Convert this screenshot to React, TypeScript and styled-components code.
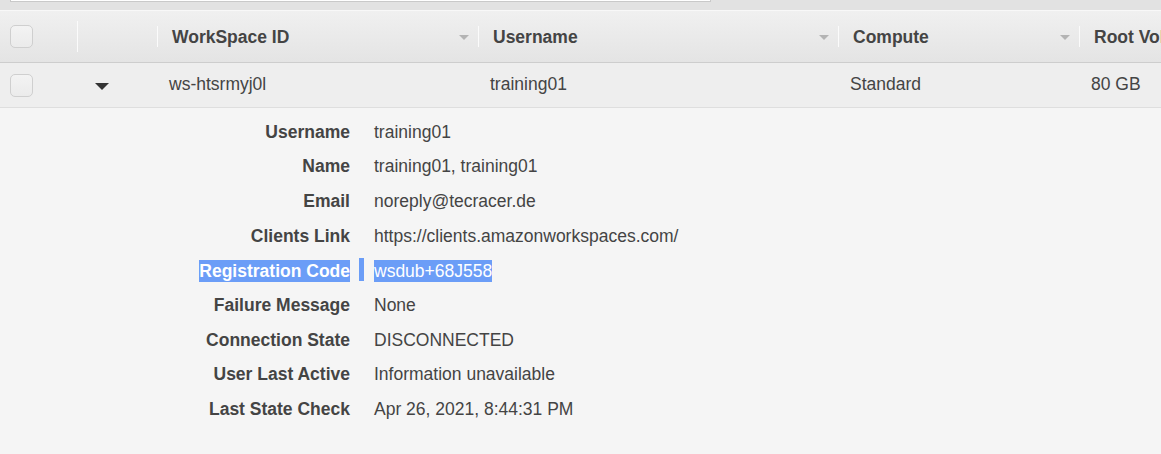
import React from "react";
import styled, { createGlobalStyle } from "styled-components";

const Global = createGlobalStyle`
  html, body { margin: 0; padding: 0; background: #f5f5f5; }
  body { font-family: "Liberation Sans", Arial, sans-serif; color: #444; }
  #root { min-height: 454px; }
`;

const Page = styled.div`
  width: 1161px;
  min-height: 454px;
  overflow: hidden;
  background: #f5f5f5;
  display: flex;
  flex-direction: column;
`;

const TopStrip = styled.div`
  height: 10px;
  background: #e2e2e2;
  border-bottom: 1px solid #f8f8f8;
  padding-left: 10px;
  display: flex;
  align-items: flex-start;
`;

const SearchBox = styled.div`
  width: 699px;
  height: 1px;
  background: #fff;
  border: 1px solid #c9c9c9;
  border-top: none;
`;

const COLS = "77px 80px 321px 360px 241px 1fr";

const HeaderRow = styled.div`
  display: grid;
  grid-template-columns: ${COLS};
  height: 51px;
  background: linear-gradient(#f0f0f0, #e4e4e4);
  border-bottom: 1px solid #cdcdcd;
`;

const HeaderCell = styled.div<{ $tall?: boolean; $sep?: boolean }>`
  position: relative;
  display: flex;
  align-items: center;
  padding-left: 15px;
  padding-top: 2px;
  font-size: 17.5px;
  font-weight: bold;
  color: #444;
  white-space: nowrap;
  overflow: hidden;
  &::before {
    content: "";
    display: ${(p) => (p.$sep ? "block" : "none")};
    position: absolute;
    left: 0;
    top: ${(p) => (p.$tall ? "10px" : "15px")};
    bottom: ${(p) => (p.$tall ? "10px" : "15px")};
    width: 1px;
    background: #fbfbfb;
    box-shadow: -1px 0 0 #dedede;
  }
`;

const CheckCell = styled.div`
  display: flex;
  align-items: center;
  padding-left: 10px;
`;

const Check = styled.div`
  width: 21px;
  height: 21px;
  border: 1px solid #cfcfcf;
  border-radius: 5px;
  background: linear-gradient(#f3f3f3, #ebebeb);
`;

const SortArrow = styled.span`
  position: absolute;
  right: 9px;
  top: 50%;
  margin-top: -2px;
  width: 0;
  height: 0;
  border-left: 5px solid transparent;
  border-right: 5px solid transparent;
  border-top: 5px solid #b3b3b3;
`;

const DataRow = styled.div`
  display: grid;
  grid-template-columns: ${COLS};
  height: 44px;
  background: #eeeeee;
  border-bottom: 1px solid #dedede;
`;

const DataCell = styled.div`
  display: flex;
  align-items: center;
  padding-left: 12px;
  padding-bottom: 1px;
  font-size: 17.5px;
  color: #444;
  white-space: nowrap;
  overflow: hidden;
`;

const ExpandCell = styled.div`
  display: flex;
  align-items: center;
  padding-left: 18px;
  padding-top: 2px;
`;

const Caret = styled.span`
  width: 0;
  height: 0;
  border-left: 7px solid transparent;
  border-right: 7px solid transparent;
  border-top: 7px solid #333;
`;

const Details = styled.div`
  flex: 1;
  padding-top: 7px;
  display: flex;
  flex-direction: column;
`;

const DetailRow = styled.div`
  display: grid;
  grid-template-columns: 350px 24px 1fr;
  align-items: center;
  height: 34.625px;
  font-size: 17.5px;
  white-space: nowrap;
`;

const Label = styled.div`
  text-align: right;
  font-weight: bold;
  color: #444;
`;

const Value = styled.div`
  color: #444;
`;

const Gap = styled.div`
  display: flex;
  justify-content: center;
  padding-right: 2px;
`;

const Sel = styled.span`
  display: inline-block;
  line-height: 22px;
  background: #6b9df7;
  color: #fff;
`;

const SelBar = styled.span`
  display: block;
  width: 5px;
  height: 23px;
  margin-top: -2px;
  background: #6b9df7;
`;

const rows: [string, string, boolean?][] = [
  ["Username", "training01"],
  ["Name", "training01, training01"],
  ["Email", "noreply@tecracer.de"],
  ["Clients Link", "https://clients.amazonworkspaces.com/"],
  ["Registration Code", "wsdub+68J558", true],
  ["Failure Message", "None"],
  ["Connection State", "DISCONNECTED"],
  ["User Last Active", "Information unavailable"],
  ["Last State Check", "Apr 26, 2021, 8:44:31 PM"],
];

export default function App() {
  return (
    <Page>
      <Global />
      <TopStrip>
        <SearchBox />
      </TopStrip>
      <HeaderRow>
        <CheckCell>
          <Check />
        </CheckCell>
        <HeaderCell $sep $tall />
        <HeaderCell $sep>
          WorkSpace ID
          <SortArrow />
        </HeaderCell>
        <HeaderCell $sep>
          Username
          <SortArrow />
        </HeaderCell>
        <HeaderCell $sep>
          Compute
          <SortArrow />
        </HeaderCell>
        <HeaderCell $sep>Root Vol</HeaderCell>
      </HeaderRow>
      <DataRow>
        <CheckCell>
          <Check />
        </CheckCell>
        <ExpandCell>
          <Caret />
        </ExpandCell>
        <DataCell>ws-htsrmyj0l</DataCell>
        <DataCell>training01</DataCell>
        <DataCell>Standard</DataCell>
        <DataCell>80 GB</DataCell>
      </DataRow>
      <Details>
        {rows.map(([label, value, selected]) => (
          <DetailRow key={label}>
            <Label>{selected ? <Sel>{label}</Sel> : label}</Label>
            <Gap>{selected ? <SelBar /> : null}</Gap>
            <Value>{selected ? <Sel>{value}</Sel> : value}</Value>
          </DetailRow>
        ))}
      </Details>
    </Page>
  );
}
